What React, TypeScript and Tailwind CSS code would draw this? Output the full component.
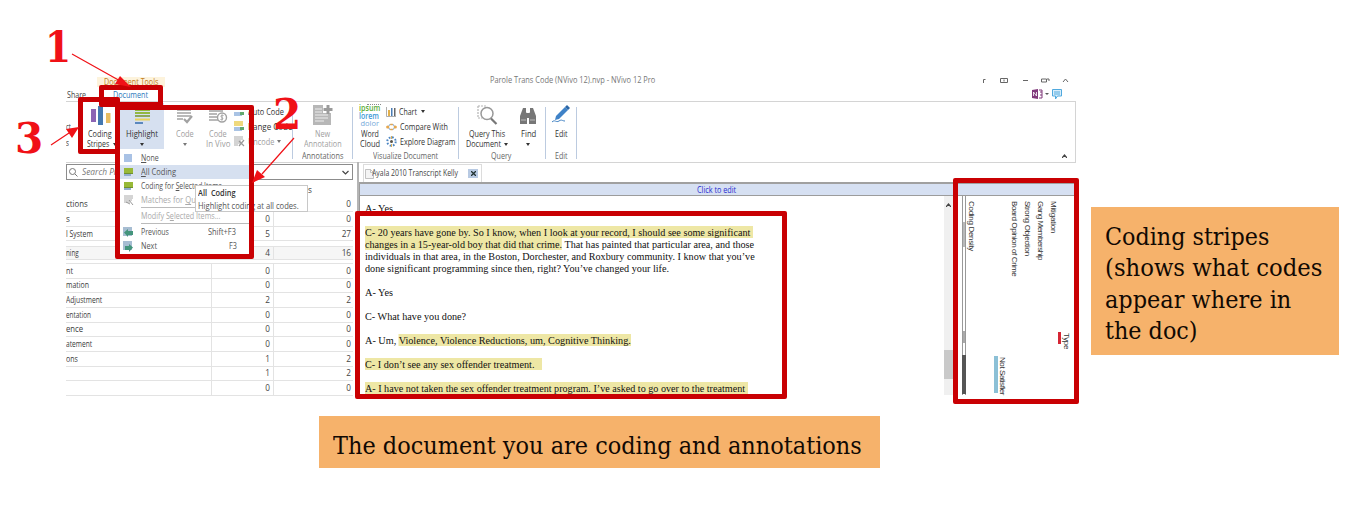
import { useLayoutEffect, useRef, useState, type ReactNode } from "react";

/* Keeps one line of text inside the width given by its class. */
function Fit({ w, className = "", children }: { w: string; className?: string; children: ReactNode }) {
  const outer = useRef<HTMLSpanElement>(null);
  const inner = useRef<HTMLSpanElement>(null);
  const [scale, setScale] = useState(1);
  useLayoutEffect(() => {
    if (outer.current && inner.current) setScale(outer.current.offsetWidth / inner.current.offsetWidth);
  }, []);
  return (
    <span ref={outer} className={`block shrink-0 whitespace-nowrap ${w} ${className}`}>
      <span ref={inner} className="inline-block origin-left" style={{ transform: `scaleX(${scale})` }}>
        {children}
      </span>
    </span>
  );
}

const Caret = ({ className = "" }: { className?: string }) => (
  <svg className={`h-[3px] w-[4px] shrink-0 ${className}`} viewBox="0 0 4 3">
    <path d="M0 0h4L2 3z" fill="currentColor" />
  </svg>
);

const Divider = () => <div className="mt-[4px] h-[52px] w-px shrink-0 bg-[#bccbe0]" />;

const StripesIcon = () => (
  <svg className="h-[21px] w-[21px]" viewBox="0 0 21 21">
    <rect x="1" y="4" width="5" height="13" fill="#8c64b4" />
    <rect x="8" y="1" width="5" height="19" fill="#4478b0" />
    <rect x="16" y="8" width="4.500" height="10" fill="#e8bd62" />
  </svg>
);

const HighlightIcon = () => (
  <svg className="h-[21px] w-[17px]" viewBox="0 0 17 21">
    <path d="M1 5h15M1 8h15" stroke="#93b840" strokeWidth="1.800" />
    <path d="M1 11h15" stroke="#7c9a35" strokeWidth="1.600" />
    <path d="M1 14.500h15" stroke="#e8d25a" strokeWidth="2" />
    <path d="M1 18h8" stroke="#4d7eb8" strokeWidth="1.800" />
  </svg>
);

const CodeIcon = ({ vivo = false }: { vivo?: boolean }) => (
  <svg className="h-[21px] w-[20px]" viewBox="0 0 20 21" fill="none" stroke="#a2a2a2">
    {vivo ? (
      <>
        <path d="M1 6h14M1 9h8M1 12h8M1 15h9" strokeWidth="1.300" />
        <circle cx="14" cy="12.500" r="4.500" fill="#fff" strokeWidth="1.400" />
        <path d="M15.500 10.500c-3-1-3 1.500-1.500 2s1 3-1.500 2M14 9.500v6" />
      </>
    ) : (
      <>
        <path d="M2 5h14M2 8h14M2 11h14M2 14h6" strokeWidth="1.300" />
        <path d="M9 14l3 3 5-6" strokeWidth="2.200" />
      </>
    )}
  </svg>
);

const SmallCodeIcon = ({ kind }: { kind: "auto" | "range" | "un" }) => (
  <svg className="h-[11px] w-[11px] shrink-0" viewBox="0 0 11 11">
    {kind === "un" ? (
      <>
        <path d="M0 1h9M0 3h9M0 5h7M0 7h6M0 9h4" stroke="#aaa" strokeWidth="1.200" />
        <path d="M5 5l5 5M10 4l-5 6" stroke="#999" strokeWidth="1.200" />
      </>
    ) : (
      <>
        <rect x="0" y={kind === "auto" ? 3 : 0} width="9" height={kind === "auto" ? 1 : 5} fill="#efd97e" />
        <rect x="0" y="6" width="8" height="4" fill="#a9c3e4" />
        <rect x="6" y="6" width="4" height="3" fill="#62a86d" />
      </>
    )}
  </svg>
);

const NoteIcon = () => (
  <svg className="h-[22px] w-[21px]" viewBox="0 0 21 22">
    <path d="M1 1h10v8h8v12H1z" fill="#b7b7b7" />
    <path d="M3 5h7M3 8h7M3 11h13M3 14h13M3 17h9" stroke="#ededed" strokeWidth="1.200" />
    <path d="M16 1v9M11.500 5.500h9" stroke="#9b9b9b" strokeWidth="3" />
  </svg>
);

const WordIcon = () => (
  <div className="flex h-[22px] w-[22px] flex-col font-semibold">
    <div className="h-[1px] w-[14px] self-end border-t border-dotted border-[#8a8a8a]" />
    <Fit w="w-[21px]" className="h-[7px] text-[8.500px] leading-[6px] text-[#5aad37]">ipsum</Fit>
    <Fit w="w-[20px]" className="h-[8px] text-[9px] leading-[8px] text-[#3d99d6]">lorem</Fit>
    <Fit w="w-[19px]" className="ml-[2px] h-[6px] text-[7.500px] leading-[6px] font-normal text-[#75a8d9]">dolor</Fit>
  </div>
);

const ChartIcon = () => (
  <svg className="h-[10px] w-[10px] shrink-0" viewBox="0 0 10 10">
    <path d="M.5 0v9.500H10" fill="none" stroke="#999" strokeWidth=".8" />
    <rect x="2" y="3" width="2" height="6" fill="#e3b04a" />
    <rect x="5" y="1" width="1.500" height="8" fill="#4b7db5" />
    <rect x="8" y="1" width="1.500" height="8" fill="#666" />
  </svg>
);
const CompareIcon = () => (
  <svg className="h-[10px] w-[11px] shrink-0" viewBox="0 0 11 10">
    <path d="M2 5l2-2.500h3L9 5 7 7.500H4z" fill="none" stroke="#8fb0d4" strokeWidth="1.100" />
    <circle cx="1.700" cy="5" r="1.600" fill="#e6a74d" />
    <circle cx="9.300" cy="5" r="1.600" fill="#e6a74d" />
    <path d="M4.300 2.500h2.500M4.300 7.500h2.500" stroke="#e6a74d" strokeWidth="1.500" />
  </svg>
);
const ExploreIcon = () => (
  <svg className="h-[11px] w-[11px] shrink-0" viewBox="0 0 11 11">
    <circle cx="5.500" cy="5.500" r="4.200" fill="none" stroke="#4d86c2" strokeWidth="2" strokeDasharray="1.700 1.600" />
    <circle cx="5.500" cy="5.500" r="1.500" fill="#56534c" />
    <path d="M5.500 0v3M5.500 8v3" stroke="#d9ae53" />
  </svg>
);

const QueryIcon = () => (
  <svg className="h-[21px] w-[21px]" viewBox="0 0 21 21" fill="none">
    <path d="M1 1h9M1 1v12h4" stroke="#b4b4b4" strokeWidth="1.200" strokeDasharray="2 1" />
    <circle cx="10" cy="8.500" r="6" fill="#fff" stroke="#999" strokeWidth="1.500" />
    <path d="M14 13.500l5.500 5.500" stroke="#777" strokeWidth="2.200" />
  </svg>
);
const FindIcon = () => (
  <svg className="h-[19px] w-[18px]" viewBox="0 0 18 19" fill="#777">
    <path d="M4 2h3v4l1 2v10H1V10zM14 2h-3v4l-1 2v10h7V10z" />
    <rect x="7" y="7" width="4" height="5" />
    <path d="M2 14h5M11 14h5" stroke="#a5a5a5" strokeWidth="1.500" />
  </svg>
);
const PencilIcon = () => (
  <svg className="h-[20px] w-[20px]" viewBox="0 0 20 20">
    <path d="M5 11L14 2l3 3-9 9-4 1z" fill="#3f82c7" />
    <path d="M14 2l2-2 3 3-2 2z" fill="#2b66a6" />
    <path d="M1 17c3-3 4 1 7-1s3 0 6 0" fill="none" stroke="#4384c5" />
  </svg>
);

function Ribbon() {
  return (
    <div className="flex h-[62px] w-[1010px] shrink-0 border-y border-r border-[#d4d4d4] pt-px text-[8.200px] leading-[10px] text-[#333]">
      <div className="flex w-[17px] shrink-0 flex-col pt-[19px]">
        <Fit w="w-[5px]" className="h-[16px]">ct</Fit>
        <Fit w="w-[3px]">s</Fit>
      </div>
      <div className="flex w-[34px] shrink-0 flex-col items-center pt-[2px]">
        <StripesIcon />
        <Fit w="w-[24px]" className="mt-[3px]">Coding</Fit>
        <div className="flex items-center gap-[4px] pl-[3px]">
          <Fit w="w-[22px]">Stripes</Fit>
          <Caret />
        </div>
      </div>
      <div className="ml-[3px] flex h-[46px] w-[44px] shrink-0 flex-col items-center bg-[#d6e0f0] pt-[2px]">
        <HighlightIcon />
        <Fit w="w-[32px]" className="mt-[3px]">Highlight</Fit>
        <Caret className="mt-[4px]" />
      </div>
      <div className="flex w-[42px] shrink-0 flex-col items-center pt-[2px] text-[#a0a0a0]">
        <CodeIcon />
        <Fit w="w-[18px]" className="mt-[3px]">Code</Fit>
        <Caret className="mt-[4px] text-[#777]" />
      </div>
      <div className="flex w-[24px] shrink-0 flex-col items-center pt-[2px] text-[#a0a0a0]">
        <CodeIcon vivo />
        <Fit w="w-[18px]" className="mt-[3px]">Code</Fit>
        <Fit w="w-[24px]">In Vivo</Fit>
      </div>
      <div className="flex w-[62px] shrink-0 flex-col pt-[1px] pl-[4px] leading-[15px]">
        <div className="flex items-center gap-[3px]"><SmallCodeIcon kind="auto" /><Fit w="w-[36px]">Auto Code</Fit></div>
        <div className="flex items-center gap-[3px]"><SmallCodeIcon kind="range" /><Fit w="w-[44px]">Range Code</Fit></div>
        <div className="flex items-center gap-[3px] text-[#a0a0a0]"><SmallCodeIcon kind="un" /><Fit w="w-[26px]">Uncode</Fit><Caret className="text-[#777]" /></div>
      </div>
      <Divider />
      <div className="flex w-[59px] shrink-0 flex-col items-center pt-[1px] text-[#a0a0a0]">
        <NoteIcon />
        <Fit w="w-[15px]" className="mt-[3px]">New</Fit>
        <Fit w="w-[38px]">Annotation</Fit>
        <Fit w="w-[41px]" className="mt-[2px] text-[#666]">Annotations</Fit>
      </div>
      <Divider />
      <div className="flex w-[105px] shrink-0 flex-col">
        <div className="flex h-[48px]">
          <div className="flex w-[33px] flex-col items-center pt-[1px]">
            <WordIcon />
            <Fit w="w-[18px]" className="mt-[3px]">Word</Fit>
            <Fit w="w-[20px]">Cloud</Fit>
          </div>
          <div className="flex flex-col pt-[1px] leading-[15px]">
            <div className="flex items-center gap-[3px]"><ChartIcon /><Fit w="w-[18px]">Chart</Fit><Caret className="ml-[1px]" /></div>
            <div className="flex items-center gap-[3px]"><CompareIcon /><Fit w="w-[48px]">Compare With</Fit></div>
            <div className="flex items-center gap-[3px]"><ExploreIcon /><Fit w="w-[55px]">Explore Diagram</Fit></div>
          </div>
        </div>
        <Fit w="w-[65px]" className="ml-[20px] text-[#666]">Visualize Document</Fit>
      </div>
      <Divider />
      <div className="flex w-[86px] shrink-0 flex-col">
        <div className="flex h-[48px]">
          <div className="flex w-[56px] flex-col items-center pt-[2px]">
            <QueryIcon />
            <Fit w="w-[36px]" className="mt-[3px]">Query This</Fit>
            <div className="flex items-center gap-[3px]"><Fit w="w-[35px]">Document</Fit><Caret /></div>
          </div>
          <div className="flex w-[26px] flex-col items-center pt-[3px]">
            <FindIcon />
            <Fit w="w-[15px]" className="mt-[4px]">Find</Fit>
            <Caret className="mt-[4px]" />
          </div>
        </div>
        <Fit w="w-[20px]" className="ml-[32px] text-[#666]">Query</Fit>
      </div>
      <Divider />
      <div className="flex w-[30px] shrink-0 flex-col items-center pt-[2px]">
        <PencilIcon />
        <Fit w="w-[13px]" className="mt-[4px]">Edit</Fit>
        <Fit w="w-[13px]" className="mt-[12px] text-[#666]">Edit</Fit>
      </div>
      <Divider />
      <div className="flex grow items-end justify-end pr-[8px] pb-[4px]">
        <svg className="h-[4px] w-[5px]" viewBox="0 0 5 4"><path d="M0 4l2.500-3L5 4" fill="none" stroke="#444" strokeWidth="1.200" /></svg>
      </div>
    </div>
  );
}

function Row({ name, w, a, b, className = "h-[14.670px]" }: { name: string; w: string; a: string; b: string; className?: string }) {
  return (
    <div className={`flex shrink-0 items-center border-b border-[#e3e3e3] ${className}`}>
      <div className="w-[145px] shrink-0"><Fit w={w}>{name}</Fit></div>
      <div className="flex h-full w-[63px] shrink-0 items-center justify-end border-x border-[#e3e3e3] pr-[3px] text-[#444]">{a}</div>
      <div className="flex grow justify-end pr-[2px] text-[#444]">{b}</div>
    </div>
  );
}

function CodeList() {
  return (
    <div className="flex w-[287px] shrink-0 flex-col text-[8.200px] leading-[12px] text-[#3a3a3a]">
      <div className="mt-[2px] flex h-[16px] w-[287px] shrink-0 items-center border border-[#8c8c8c] pl-[2px] text-[#777]">
        <svg className="mr-[4px] h-[9px] w-[9px]" viewBox="0 0 9 9" fill="none" stroke="#777"><circle cx="3.500" cy="3.500" r="3" /><path d="M6 6l2.500 2.500" /></svg>
        <Fit w="w-[53px]" className="italic">Search Project</Fit>
        <svg className="mr-[3px] ml-auto h-[5px] w-[7px]" viewBox="0 0 7 5"><path d="M.5 1l3 3 3-3" fill="none" stroke="#444" strokeWidth="1.200" /></svg>
      </div>
      <div className="h-[17px] shrink-0 pt-[4px] pl-[242px]">s</div>
      <div className="flex h-[15px] shrink-0 items-center border-b border-[#e3e3e3]">
        <Fit w="w-[22px]">ctions</Fit>
        <span className="ml-auto pr-[2px] text-[#444]">0</span>
      </div>
      <Row name="s" w="w-[4px]" a="0" b="0" className="h-[15px]" />
      <Row name="l System" w="w-[27px]" a="5" b="27" className="h-[14px]" />
      <Row name="ning" w="w-[13px]" a="4" b="16" className="mt-[5px] h-[14px] border-t bg-[#f6f6f6]" />
      <div className="mt-[3px] flex flex-col border-t border-[#e3e3e3]">
        <Row name="nt" w="w-[7px]" a="0" b="0" />
        <Row name="mation" w="w-[23px]" a="0" b="0" />
        <Row name="Adjustment" w="w-[36px]" a="2" b="2" />
        <Row name="entation" w="w-[25px]" a="0" b="0" />
        <Row name="ence" w="w-[17px]" a="0" b="0" />
        <Row name="atement" w="w-[26px]" a="0" b="0" />
        <Row name="ons" w="w-[12px]" a="1" b="2" />
        <Row name="" w="w-[1px]" a="1" b="2" />
        <Row name="" w="w-[1px]" a="0" b="0" />
      </div>
    </div>
  );
}

const Mark = ({ children }: { children: ReactNode }) => <span className="bg-[#eee7a5]">{children}</span>;

function Transcript() {
  return (
    <div className="flex w-[584px] shrink-0 flex-col pt-[6px] pl-[5px] font-['Liberation_Serif',serif] text-[11px] leading-[12.050px] text-[#111]">
      <Fit w="w-[28px]">A- Yes</Fit>
      <Fit w="w-[388px]" className="mt-[12px]"><Mark>C- 20 years have gone by. So I know, when I look at your record, I should see some significant&nbsp;</Mark></Fit>
      <Fit w="w-[389px]"><Mark>changes in a 15-year-old boy that did that crime.</Mark> That has painted that particular area, and those</Fit>
      <Fit w="w-[390px]">individuals in that area, in the Boston, Dorchester, and Roxbury community. I know that you’ve</Fit>
      <Fit w="w-[304px]">done significant programming since then, right? You’ve changed your life.</Fit>
      <Fit w="w-[28px]" className="mt-[12px]">A- Yes</Fit>
      <Fit w="w-[101px]" className="mt-[12px]">C- What have you done?</Fit>
      <Fit w="w-[266px]" className="mt-[12px]">A- Um, <Mark>Violence, Violence Reductions, um, Cognitive Thinking.</Mark></Fit>
      <Fit w="w-[177px]" className="mt-[12px]"><Mark>C- I don’t see any sex offender treatment.&nbsp;&nbsp;&nbsp;</Mark></Fit>
      <Fit w="w-[383px]" className="mt-[12px]"><Mark>A- I have not taken the sex offender treatment program. I’ve asked to go over to the treatment&nbsp;</Mark></Fit>
    </div>
  );
}

function Label({ className = "", children }: { className?: string; children: ReactNode }) {
  return <div className={`w-[13px] shrink-0 whitespace-nowrap [writing-mode:vertical-rl] ${className}`}>{children}</div>;
}

function Stripes() {
  return (
    <div className="flex h-[200px] grow pl-[9px] font-['Liberation_Sans',sans-serif] text-[8px] leading-[13px] text-[#333]">
      <div className="flex h-[199px] w-[4px] shrink-0 flex-col border-x border-[#999]">
        <div className="mt-[26px] h-[25px] bg-[#b9b9b9]" />
        <div className="mt-[84px] h-[12px] bg-[#aaa]" />
        <div className="-mx-px mt-[12px] h-[39px] bg-[#555]" />
      </div>
      <Label className="-ml-[1px] pt-[5px] tracking-[-0.300px]">Coding Density</Label>
      <div className="mt-[160px] ml-[16px] h-[37px] w-[4px] shrink-0 bg-[#8cc0d6]" />
      <Label className="-ml-[2px] pt-[161px] tracking-[-0.420px]">Not Satisfier</Label>
      <Label className="-ml-[1px] pt-[5px] tracking-[-0.380px]">Board Opinion of Crime</Label>
      <Label className="pt-[5px] tracking-[-0.300px]">Strong Objection</Label>
      <Label className="pt-[5px] tracking-[-0.450px]">Gang Membership</Label>
      <Label className="pt-[5px] tracking-[-0.200px]">Mitigation</Label>
      <div className="-ml-[2px] mt-[136px] h-[12px] w-[3px] shrink-0 bg-[#d52635]" />
      <Label className="-ml-[1px] pt-[137px] tracking-[-0.300px]">Type</Label>
    </div>
  );
}

function DocumentPane() {
  return (
    <div className="ml-[4px] flex grow flex-col border-l-2 border-[#b5b5b5]">
      <div className="flex h-[20px] shrink-0 items-end pl-[4px]">
        <div className="flex h-[18px] w-[119px] items-center border border-b-0 border-[#dcdcdc] text-[8.200px] text-[#444]">
          <svg className="ml-[1px] h-[10px] w-[9px] shrink-0" viewBox="0 0 9 10"><path d="M.5.5h5l3 3v6h-8zM5.500.5v3h3" fill="#f4f4f4" stroke="#aaa" strokeWidth=".7" /></svg>
          <Fit w="w-[86px]" className="-ml-[2px] text-[#444]">Ayala 2010 Transcript Kelly</Fit>
          <div className="ml-[10px] flex h-[9px] w-[10px] items-center justify-center bg-[#b8cae3]">
            <svg className="h-[5px] w-[5px]" viewBox="0 0 5 5"><path d="M0 0l5 5M5 0L0 5" stroke="#233" strokeWidth="1.300" /></svg>
          </div>
        </div>
      </div>
      <div className="h-[2px] shrink-0 bg-[#a0a0a0]" />
      <div className="flex h-[12px] shrink-0 border-b border-l border-[#9c9c9c] bg-[#d6e0f2] pl-[337px] text-[8.200px] leading-[11px] text-[#2a2fd0]">
        <Fit w="w-[39px]">Click to edit</Fit>
      </div>
      <div className="flex grow border-l border-[#999]">
        <Transcript />
        <div className="flex h-[199px] w-[9px] shrink-0 flex-col items-center bg-[#f0f0f0]">
          <svg className="mt-[7px] h-[4px] w-[5px] shrink-0" viewBox="0 0 5 4"><path d="M0 4l2.500-3L5 4" fill="none" stroke="#444" strokeWidth="1.200" /></svg>
          <div className="mt-[143px] h-[29px] w-[9px] shrink-0 bg-[#c9c9c9]" />
        </div>
        <Stripes />
      </div>
    </div>
  );
}

function TitleBar() {
  return (
    <div className="flex h-[10px] shrink-0 text-[8.200px] leading-[9px]">
      <div className="ml-[31px] w-[68px] bg-[#fdf3dc] pl-[7px] text-[#c27c20]"><Fit w="w-[54px]">Document Tools</Fit></div>
      <div className="ml-[325px] text-[#777]"><Fit w="w-[165px]" className="-mt-[2px]">Parole Trans Code (NVivo 12).nvp - NVivo 12 Pro</Fit></div>
      <svg className="mt-[1px] ml-[327px] h-[6px] w-[88px] shrink-0" viewBox="0 0 88 6" fill="none" stroke="#666">
        <path d="M1.500 5V1.500h2M18.500.5h7v4h-7zM22 1.500v2M41 2.500h5M59.500 1h5v3h-5zM65 1h2v2M81 4l2.500-3L86 4" />
      </svg>
    </div>
  );
}

function TabRow() {
  return (
    <div className="flex h-[14px] shrink-0 text-[8.200px] leading-[16px]">
      <Fit w="w-[19px]" className="ml-px text-[#444]">Share</Fit>
      <Fit w="w-[35px]" className="ml-[27px] text-[#2b79bd]">Document</Fit>
      <svg className="mt-[1px] ml-[884px] h-[12px] w-[32px] shrink-0" viewBox="0 0 32 12">
        <path d="M0 2l6-1v10l-6-1z" fill="#80397b" />
        <path d="M1.500 8V4l3 4V4" stroke="#fff" fill="none" strokeWidth=".8" />
        <path d="M7 2h3v8H7M8 4h2M8 7h2" stroke="#80397b" fill="none" />
        <path d="M13 5h4l-2 2z" fill="#555" />
        <path d="M20.500 1.500h9v6.500h-4l-2 3V8h-3zM22 4h6M22 6h6" fill="#d9eefb" stroke="#50a9de" />
      </svg>
    </div>
  );
}

const MenuIcon = ({ kind }: { kind: string }) => (
  <svg className="mr-[7px] h-[11px] w-[11px] shrink-0" viewBox="0 0 11 11">
    {kind === "none" && <path d="M1 1h8v8H1z" fill="#a9c2e5" />}
    {kind === "all" && <><path d="M1 1h9v5H1z" fill="#98b937" /><path d="M1 6h7v3H1z" fill="#92adce" /><path d="M1 6.500h9" stroke="#6f902f" /></>}
    {kind === "query" && <><path d="M1 1h9M1 3h9M1 5h8M1 7h6" stroke="#aaa" /><path d="M6 5l4 5M3 7l4 2" stroke="#999" /></>}
    {(kind === "prev" || kind === "next") && (
      <>
        <path d="M0 0h9v9H0z" fill="#a7bdd2" />
        <path d={kind === "prev" ? "M1 5.500L5 2v2h5v4H5v2z" : "M10 6.500L6 3v2H2v4h4v2z"} fill="#44957c" />
      </>
    )}
  </svg>
);

function Menu() {
  const item = "flex h-[14px] shrink-0 items-center pl-[3px]";
  return (
    <div className="absolute top-[151px] left-[120px] flex h-[103px] w-[130px] flex-col bg-white text-[8.200px] leading-[14px] text-[#555]">
      <div className={item}><MenuIcon kind="none" /><Fit w="w-[18px]"><u>N</u>one</Fit></div>
      <div className={`${item} bg-[#d6e0f0]`}><MenuIcon kind="all" /><Fit w="w-[35px]"><u>A</u>ll Coding</Fit></div>
      <div className={item}><MenuIcon kind="all" /><Fit w="w-[86px]">Coding for <u>S</u>elected Items...</Fit></div>
      <div className={`${item} text-[#aaa]`}><MenuIcon kind="query" /><Fit w="w-[66px]">Matches for <u>Q</u>uery</Fit></div>
      <div className="mr-px ml-[21px] h-px shrink-0 bg-[#bbb]" />
      <div className="flex h-[15px] shrink-0 items-center pl-[21px] text-[#aaa]"><Fit w="w-[79px]">Modify S<u>e</u>lected Items...</Fit></div>
      <div className="mr-px ml-[21px] h-px shrink-0 bg-[#bbb]" />
      <div className={`${item} mt-[1px]`}><MenuIcon kind="prev" /><Fit w="w-[28px]">Previous</Fit><Fit w="w-[28px]" className="ml-[39px]">Shift+F3</Fit></div>
      <div className={item}><MenuIcon kind="next" /><Fit w="w-[16px]">Next</Fit><Fit w="w-[8px]" className="ml-[72px]">F3</Fit></div>
    </div>
  );
}

function Overlays() {
  const frame = "absolute rounded-[2px] border-[#c90003]";
  const digit = "absolute font-['DejaVu_Serif',serif] font-bold text-[#f01117] text-[42px] leading-[42px]";
  const note = "absolute bg-[#f6b26b] font-['DejaVu_Serif_Condensed','DejaVu_Serif',serif] text-[24px] leading-[31.300px] text-[#110903]";
  return (
    <>
      <Menu />
      <div className="absolute top-[185px] left-[195px] flex h-[27px] w-[113px] flex-col border border-[#c8c8c8] bg-white pl-[2px] text-[8.200px] leading-[13px] text-[#555]">
        <Fit w="w-[38px]" className="font-semibold text-[#333]">All&nbsp; Coding</Fit>
        <Fit w="w-[101px]">Highlight coding at all codes.</Fit>
      </div>
      <div className={`${frame} top-[85px] left-[99px] h-[22px] w-[64px] border-[5px]`} />
      <div className={`${frame} top-[105px] left-[115px] h-[154px] w-[139px] border-[5px]`} />
      <div className={`${frame} top-[97px] left-[78px] h-[57px] w-[42px] border-[5px]`} />
      <div className={`${frame} top-[211px] left-[355px] h-[188px] w-[432px] border-[5px]`} />
      <div className={`${frame} top-[178px] left-[953px] h-[226px] w-[126px] border-[5.500px]`} />
      <svg className="absolute top-0 left-0 h-[200px] w-[310px]" viewBox="0 0 310 200" stroke="#f01117" fill="#f01117" strokeWidth="1.200">
        <path d="M72 54l50 28M51 145l18-12M294 138l-32 36" />
        <path d="M131 87l-16-3 5-8zM79 127l-7 11-6-9zM252 183l5-13 8 7z" stroke="none" />
      </svg>
      <div className={`${digit} top-[27px] left-[45px]`}><Fit w="w-[26px]">1</Fit></div>
      <div className={`${digit} top-[94px] left-[273px]`}><Fit w="w-[28px]">2</Fit></div>
      <div className={`${digit} top-[118px] left-[15px]`}><Fit w="w-[28px]">3</Fit></div>
      <div className={`${note} top-[207px] left-[1091px] flex h-[148px] w-[248px] flex-col pt-[15px] pl-[14px]`}>
        <Fit w="w-[164px]">Coding stripes</Fit>
        <Fit w="w-[217px]">(shows what codes</Fit>
        <Fit w="w-[186px]">appear where in</Fit>
        <Fit w="w-[93px]">the doc)</Fit>
      </div>
      <div className={`${note} top-[416px] left-[319px] h-[52px] w-[561px] pt-[15px] pl-[14px]`}>
        <Fit w="w-[529px]">The document you are coding and annotations</Fit>
      </div>
    </>
  );
}

export default function App() {
  return (
    <main className="relative h-[526px] w-[1360px] overflow-hidden bg-white font-['Open_Sans','Noto_Sans',sans-serif]">
      <div className="ml-[66px] flex h-[396px] w-[1010px] flex-col overflow-hidden pt-[77px]">
        <TitleBar />
        <TabRow />
        <Ribbon />
        <div className="-mt-px flex grow">
          <CodeList />
          <DocumentPane />
        </div>
      </div>
      <Overlays />
    </main>
  );
}
